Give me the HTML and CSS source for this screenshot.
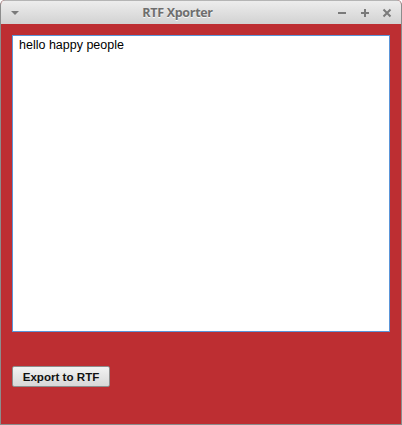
FILE: index.html
```html
<!DOCTYPE html>
<html>
<head>
<meta charset="utf-8">
<link rel="stylesheet" href="styles.css">
</head>
<body>
<div class="window">
  <div class="titlebar">
    <div class="tb-left">
      <svg width="10" height="6" viewBox="0 0 10 6"><path d="M1 1 L9 1 L5 5 Z" fill="#7a7a7a"/></svg>
    </div>
    <div class="title">RTF Xporter</div>
    <div class="tb-right">
      <svg class="ic-min" width="10" height="10" viewBox="0 0 10 10"><rect x="1" y="4" width="8" height="2" fill="#7a7a7a"/></svg>
      <svg width="10" height="10" viewBox="0 0 10 10"><rect x="1" y="4" width="8" height="2" fill="#7a7a7a"/><rect x="4" y="1" width="2" height="8" fill="#7a7a7a"/></svg>
      <svg width="10" height="10" viewBox="0 0 10 10"><path d="M1.5 1.5 L8.5 8.5 M8.5 1.5 L1.5 8.5" stroke="#7a7a7a" stroke-width="2"/></svg>
    </div>
  </div>
  <div class="content">
    <div class="textarea">hello happy people</div>
    <div class="actions">
      <button class="btn">Export to RTF</button>
    </div>
  </div>
</div>
</body>
</html>
```
FILE: styles.css
```css
html, body {
  margin: 0;
  padding: 0;
  width: 402px;
  height: 425px;
  overflow: hidden;
  background: #ffffff;
}
.window {
  box-sizing: border-box;
  width: 402px;
  height: 425px;
  display: flex;
  flex-direction: column;
  border: 1px solid #8c8c8c;
  border-top: none;
  border-radius: 5px 5px 0 0;
  background: #bd2e32;
  overflow: hidden;
}
.titlebar {
  height: 24px;
  flex: none;
  display: flex;
  align-items: center;
  background: linear-gradient(#ededed, #d2d2d2);
  border-top: 1px solid #b5b5b5;
  box-sizing: border-box;
}
.tb-left {
  width: 30px;
  padding-left: 9px;
  box-sizing: border-box;
  display: flex;
  align-items: center;
}
.title {
  flex: 1;
  text-align: center;
  font-family: "Open Sans", "DejaVu Sans", sans-serif;
  font-weight: 700;
  font-size: 12.5px;
  letter-spacing: -0.3px;
  color: #6e6e6e;
  text-shadow: 0 1px 0 #f8f8f8;
  padding-right: 13px;
}
.tb-right {
  display: flex;
  gap: 12px;
  padding-right: 9px;
  align-items: center;
}
.ic-min {
  margin-right: 1px;
}
.content {
  flex: 1;
  padding: 11px 11px 0 11px;
  display: flex;
  flex-direction: column;
}
.textarea {
  box-sizing: border-box;
  height: 297px;
  background: #ffffff;
  border: 1px solid #5b95d8;
  padding: 2px 6px;
  font-family: "Liberation Sans", Arial, sans-serif;
  font-size: 12.5px;
  color: #000;
}
.actions {
  padding-top: 34px;
}
.btn {
  box-sizing: border-box;
  width: 98px;
  height: 21px;
  padding: 0;
  font-family: "Liberation Sans", Arial, sans-serif;
  font-weight: 700;
  font-size: 11.6px;
  color: #111;
  background: linear-gradient(#f2f2f2, #d8d8d8);
  border: 1px solid #8d8d8d;
  border-radius: 2px;
}
```
